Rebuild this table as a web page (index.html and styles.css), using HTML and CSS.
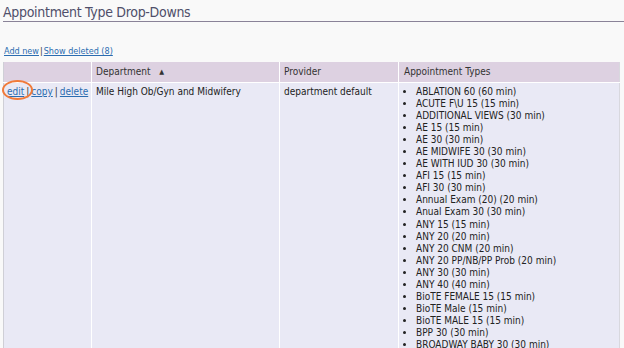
FILE: index.html
```html
<!DOCTYPE html>
<html>
<head>
<meta charset="utf-8">
<link rel="stylesheet" href="styles.css">
</head>
<body>
<div class="page">
  <h1 class="title">Appointment Type Drop-Downs</h1>
  <div class="actions"><a href="#">Add new</a><span class="sep">|</span><a href="#">Show deleted (8)</a></div>
  <table class="grid">
    <thead>
      <tr>
        <th class="c1"></th>
        <th class="c2">Department <span class="sort">▲</span></th>
        <th class="c3">Provider</th>
        <th class="c4">Appointment Types</th>
      </tr>
    </thead>
    <tbody>
      <tr>
        <td class="c1 ops"><span class="hl"><a href="#">edit</a><span class="ring"></span></span><span class="sep">|</span><a href="#">copy</a><span class="sep">|</span><a href="#">delete</a></td>
        <td class="c2">Mile High Ob/Gyn and Midwifery</td>
        <td class="c3">department default</td>
        <td class="c4">
          <ul class="types">
            <li>ABLATION 60 (60 min)</li>
            <li>ACUTE F\U 15 (15 min)</li>
            <li>ADDITIONAL VIEWS (30 min)</li>
            <li>AE 15 (15 min)</li>
            <li>AE 30 (30 min)</li>
            <li>AE MIDWIFE 30 (30 min)</li>
            <li>AE WITH IUD 30 (30 min)</li>
            <li>AFI 15 (15 min)</li>
            <li>AFI 30 (30 min)</li>
            <li>Annual Exam (20) (20 min)</li>
            <li>Anual Exam 30 (30 min)</li>
            <li>ANY 15 (15 min)</li>
            <li>ANY 20 (20 min)</li>
            <li>ANY 20 CNM (20 min)</li>
            <li>ANY 20 PP/NB/PP Prob (20 min)</li>
            <li>ANY 30 (30 min)</li>
            <li>ANY 40 (40 min)</li>
            <li>BioTE FEMALE 15 (15 min)</li>
            <li>BioTE Male (15 min)</li>
            <li>BioTE MALE 15 (15 min)</li>
            <li>BPP 30 (30 min)</li>
            <li>BROADWAY BABY 30 (30 min)</li>
          </ul>
        </td>
      </tr>
    </tbody>
  </table>
</div>
</body>
</html>
```
FILE: styles.css
```css
html, body {
  margin: 0;
  padding: 0;
  background: #f9f9f9;
  font-family: "DejaVu Sans Condensed", "DejaVu Sans", sans-serif;
  font-stretch: condensed;
  font-size: 10px;
  color: #222;
  overflow: hidden;
}
.page {
  padding: 0 0 0 3px;
}
.title {
  margin: 0;
  padding: 5px 0 2px 0;
  height: 14px;
  font-size: 14px;
  letter-spacing: -0.3px;
  font-weight: normal;
  color: #4f4f6a;
  line-height: 14px;
  border-bottom: 1px solid #8a8398;
}
.actions {
  margin-top: 23px;
  padding-left: 1px;
  height: 17px;
  line-height: 13px;
  font-size: 9px;
}
.actions a, .ops a {
  color: #2b6cb0;
  text-decoration: underline;
}
.sep {
  color: #333;
  margin: 0 2px;
}
.actions .sep {
  margin: 0 1px;
}
.grid {
  border-collapse: collapse;
  table-layout: fixed;
  width: 617px;
  border-left: 1px solid #cfcfd6;
  border-right: 1px solid #d8d8de;
}
.grid th, .grid td {
  box-sizing: border-box;
  border: 1px solid #ffffff;
  border-top: 0;
  padding: 0 4px;
  text-align: left;
  vertical-align: top;
  white-space: nowrap;
  overflow: visible;
}
.grid th {
  background: #ddd1e1;
  font-weight: normal;
  height: 20px;
  line-height: 19px;
  color: #333;
}
.grid td {
  background: #e9e9f5;
  padding-top: 3px;
  line-height: 12px;
  height: 270px;
}
.grid tr > :first-child { border-left: 0; }
.grid tr > :last-child { border-right: 0; }
.c1 { width: 88px; padding-left: 3px !important; padding-right: 0 !important; }
.c2 { width: 188px; }
.c3 { width: 119px; }
.c4 { padding-left: 5px !important; }
.sort {
  font-size: 7px;
  margin-left: 6px;
  vertical-align: 1px;
}
.hl {
  position: relative;
}
.ring {
  position: absolute;
  left: -5px;
  top: -6px;
  width: 31px;
  height: 20px;
  border: 2px solid #f07a3a;
  border-radius: 50%;
  box-sizing: border-box;
  pointer-events: none;
}
.types {
  margin: 0;
  padding: 0 0 0 12px;
  list-style: disc;
}
.types li {
  line-height: 12.05px;
}
```
